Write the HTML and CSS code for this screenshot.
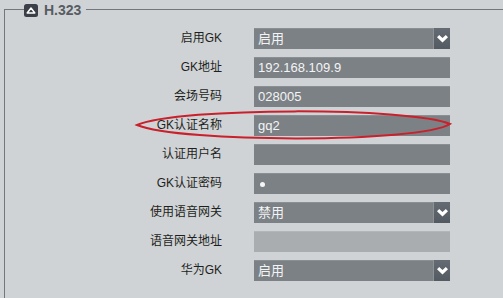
FILE: index.html
```html
<!DOCTYPE html>
<html lang="zh">
<head>
<meta charset="utf-8">
<link rel="stylesheet" href="styles.css">
</head>
<body>
<div class="page">
  <div class="group">
    <div class="legend">
      <span class="icon"><svg width="14" height="13" viewBox="0 0 14 13"><rect x="0" y="0" width="14" height="13" rx="2.5" fill="#3b4048"/><path d="M3.2,9 L7,4 L10.8,9 Z" fill="none" stroke="#ffffff" stroke-width="1.5" stroke-linejoin="round"/></svg></span>
      <span class="title">H.323</span>
    </div>
    <div class="form">
      <div class="label">启用GK</div>
      <div class="field select"><span class="val">启用</span><span class="btn"><svg width="11" height="8" viewBox="0 0 11 8"><path d="M0,2.2 L2.2,0 L5.5,3 L8.8,0 L11,2.2 L5.5,7.5 Z" fill="#ffffff"/></svg></span></div>

      <div class="label">GK地址</div>
      <div class="field"><span class="val">192.168.109.9</span></div>

      <div class="label">会场号码</div>
      <div class="field"><span class="val">028005</span></div>

      <div class="label">GK认证名称</div>
      <div class="field"><span class="val">gq2</span></div>

      <div class="label">认证用户名</div>
      <div class="field"><span class="val"></span></div>

      <div class="label">GK认证密码</div>
      <div class="field"><span class="dot"></span></div>

      <div class="label">使用语音网关</div>
      <div class="field select"><span class="val">禁用</span><span class="btn"><svg width="11" height="8" viewBox="0 0 11 8"><path d="M0,2.2 L2.2,0 L5.5,3 L8.8,0 L11,2.2 L5.5,7.5 Z" fill="#ffffff"/></svg></span></div>

      <div class="label">语音网关地址</div>
      <div class="field disabled"><span class="val"></span></div>

      <div class="label">华为GK</div>
      <div class="field select"><span class="val">启用</span><span class="btn"><svg width="11" height="8" viewBox="0 0 11 8"><path d="M0,2.2 L2.2,0 L5.5,3 L8.8,0 L11,2.2 L5.5,7.5 Z" fill="#ffffff"/></svg></span></div>
    </div>
  </div>
  <svg class="mark" width="503" height="298" viewBox="0 0 503 298">
    <path d="M137,125 C180,107 410,107 450,124 C420,143 180,143 137,125 Z" fill="none" stroke="#c9202b" stroke-width="2"/>
  </svg>
</div>
</body>
</html>
```

FILE: styles.css
```css
* { box-sizing: border-box; }
html, body {
  margin: 0;
  padding: 0;
  background: #d0d3d6;
}
.page {
  position: relative;
  width: 503px;
  height: 298px;
  overflow: hidden;
  font-family: "Liberation Sans", "Noto Sans CJK SC", sans-serif;
}
.group {
  margin: 9px 0 0 4px;
  height: 289px;
  border-top: 1px solid #73777c;
  border-left: 1px solid #73777c;
}
.legend {
  display: flex;
  align-items: center;
  gap: 6px;
  width: fit-content;
  height: 14px;
  margin: -7px 0 0 19px;
  padding: 0 5px 0 0;
  background: #d0d3d6;
}
.icon {
  display: flex;
  width: 14px;
  height: 13px;
}
.title {
  font-size: 14px;
  font-weight: bold;
  color: #575c63;
  line-height: 14px;
}
.form {
  display: grid;
  grid-template-columns: 217px 196px;
  column-gap: 32px;
  row-gap: 8px;
  grid-auto-rows: 21px;
  padding-top: 11px;
}
.label {
  text-align: right;
  font-size: 12px;
  line-height: 21px;
  color: #1e1f21;
}
.field {
  display: flex;
  align-items: center;
  height: 21px;
  background: #7c8185;
  border-top: 1px solid #8a8f93;
}
.field.disabled {
  background: #a9adb0;
  border-top-color: #b2b6b9;
}
.val {
  flex: 1;
  padding-left: 4px;
  font-size: 13px;
  line-height: 20px;
  color: #f3f4f5;
}
.btn {
  display: flex;
  align-items: center;
  justify-content: center;
  width: 17px;
  height: 21px;
  margin-top: -1px;
  background: linear-gradient(#646b73, #535a62);
  border-left: 1px solid #8d9297;
}
.dot {
  width: 5px;
  height: 5px;
  margin-left: 6px;
  border-radius: 50%;
  background: #f5f5f5;
}
.mark {
  position: absolute;
  left: 0;
  top: 0;
}
```
